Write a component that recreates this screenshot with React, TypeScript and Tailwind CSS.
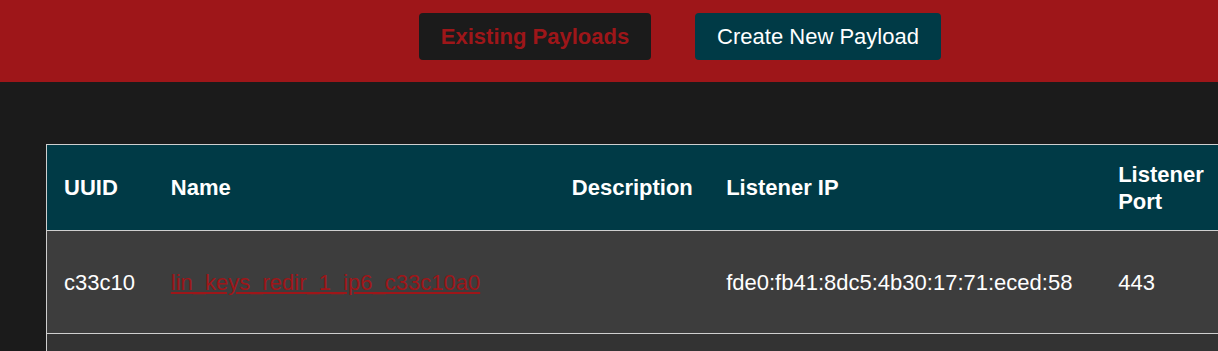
const COLUMNS = [
  { label: "UUID", width: "w-[107px]" },
  { label: "Name", width: "w-[400px]" },
  { label: "Description", width: "w-[154px]" },
  { label: "Listener IP", width: "w-[391px]" },
  { label: "Listener Port", width: "w-[124px]" },
];

const PAYLOADS = [
  {
    uuid: "c33c10",
    name: "lin_keys_redir_1_ip6_c33c10a0",
    description: "",
    ip: "fde0:fb41:8dc5:4b30:17:71:eced:58",
    port: "443",
  },
];

export default function App() {
  return (
    <div
      className="min-h-screen overflow-hidden bg-[#1b1b1b] text-[22px] text-white"
      style={{ fontFamily: '"Liberation Sans", Arial, sans-serif' }}
    >
      <header className="flex h-[82px] items-start gap-[44px] bg-[#9e1619] pl-[419px] pt-[13px]">
        <button className="h-[47px] w-[232px] rounded-[4px] bg-[#1b1b1b] font-bold text-[#9e1619]">
          Existing Payloads
        </button>
        <button className="h-[47px] w-[246px] rounded-[4px] bg-[#003a46] text-white">
          Create New Payload
        </button>
      </header>

      <main className="pl-[46px] pt-[62px]">
        <table className="w-[1180px] table-fixed border-collapse border border-[#cfcfcf] text-left">
          <thead>
            <tr className="h-[86px] bg-[#003a46]">
              {COLUMNS.map((c) => (
                <th
                  key={c.label}
                  className={`${c.width} pl-[17px] pr-[18px] align-middle font-bold leading-[27px]`}
                >
                  {c.label}
                </th>
              ))}
            </tr>
          </thead>
          <tbody>
            {PAYLOADS.map((p) => (
              <tr key={p.uuid} className="h-[103px] border-t border-[#cfcfcf] bg-[#3d3d3d]">
                <td className="pl-[17px] pr-[18px]">{p.uuid}</td>
                <td className="pl-[17px] pr-[18px]">
                  <a href="#" className="text-[#9e1619] underline">
                    {p.name}
                  </a>
                </td>
                <td className="pl-[17px] pr-[18px]">{p.description}</td>
                <td className="pl-[17px] pr-[18px] whitespace-nowrap">{p.ip}</td>
                <td className="pl-[17px] pr-[18px]">{p.port}</td>
              </tr>
            ))}
            <tr className="h-[60px] border-t border-[#cfcfcf] bg-[#333333]">
              <td colSpan={5} />
            </tr>
          </tbody>
        </table>
      </main>
    </div>
  );
}
